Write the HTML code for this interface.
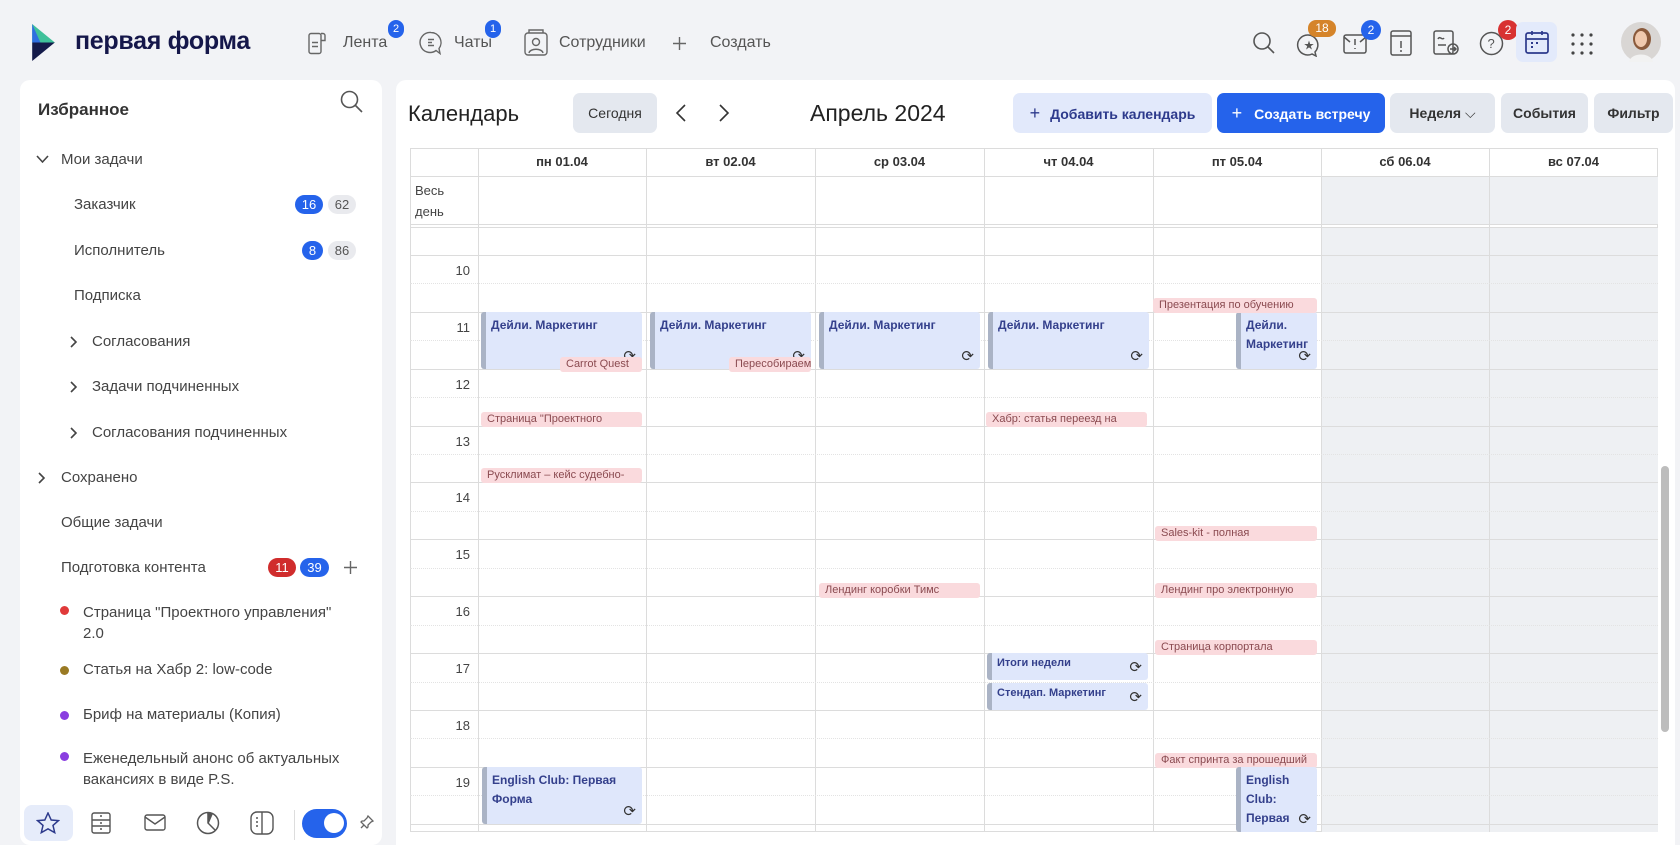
<!DOCTYPE html>
<html><head><meta charset="utf-8"><style>
*{box-sizing:border-box;margin:0;padding:0}
body{width:1680px;height:845px;overflow:hidden;background:#f2f3f6;font-family:"Liberation Sans","Noto Sans CJK SC",sans-serif;position:relative;color:#333}
.a{position:absolute}
.nav{font-size:16px;color:#555;top:34px}
.badge{position:absolute;height:16px;min-width:16px;border-radius:8px;color:#fff;font-size:11px;text-align:center;line-height:16px;padding:0 4px}
.side{left:20px;top:80px;width:362px;height:765px;background:#fff;border-radius:10px}
.si{position:absolute;font-size:15px;color:#444;white-space:nowrap}
.pill{position:absolute;height:19px;border-radius:10px;font-size:13px;text-align:center;line-height:19px}
.main{left:396px;top:80px;width:1279px;height:765px;background:#fff;border-radius:10px}
.btn{position:absolute;top:93px;height:40px;border-radius:7px;background:#e4e8ef;font-size:14px;color:#333;font-weight:bold;text-align:center;line-height:40px}
.hl{position:absolute;left:410px;width:1248px;height:1px;background:#dcdcdc}
.hh{position:absolute;left:410px;width:1248px;height:0;border-top:1px dotted #e3e3e3}
.vl{position:absolute;top:148px;width:1px;height:684px;background:#dcdcdc}
.dh{position:absolute;top:148px;height:28px;font-size:13px;font-weight:bold;color:#333;text-align:center;line-height:28px}
.hr{position:absolute;left:430px;width:40px;text-align:right;font-size:13px;color:#444}
.ev{position:absolute;background:#dfe7fb;border-left:5px solid #aab3c5;border-radius:3px;color:#34408c;font-size:12px;font-weight:bold;padding:4px 5px;line-height:19px;overflow:hidden}
.pk{position:absolute;background:#fadadd;color:#8a4a50;font-size:11px;height:15px;line-height:15px;padding:0 6px;border-radius:3px;overflow:hidden;white-space:nowrap}
.rep{position:absolute;right:6px;bottom:3px;font-size:15px;color:#333;font-weight:normal}
.chev{position:absolute}
</style></head><body>
<!-- logo -->
<svg class="a" style="left:32px;top:24px" width="23" height="37" viewBox="0 0 22 36"><polygon points="0,0 22,18 0,18" fill="#3fc19a"/><polygon points="0,0 0,18 8,18" fill="#2f6fe0"/><polygon points="0,18 22,18 0,36" fill="#141a4a"/></svg>
<div class="a" style="left:75px;top:27px;font-size:25px;font-weight:bold;color:#15174a;letter-spacing:-0.3px">первая форма</div>
<!-- nav -->
<svg class="a" style="left:308px;top:30px" width="18" height="25" viewBox="0 0 18 24" fill="none" stroke="#666" stroke-width="1.4"><rect x="1" y="3" width="12" height="20" rx="2"/><path d="M13 3h2a2 2 0 0 1 2 2v5h-4M4 12h6M4 16h6"/></svg>
<div class="a nav" style="left:343px">Лента</div><div class="badge" style="left:388px;top:20px;background:#2563eb;height:18px;line-height:18px;border-radius:9px">2</div>
<svg class="a" style="left:419px;top:30px" width="24" height="25" viewBox="0 0 24 24" fill="none" stroke="#666" stroke-width="1.4"><path d="M12 2a10 10 0 1 0 5 18l4 3-1-5A10 10 0 0 0 12 2z"/><path d="M9 9h6M9 12h4M9 15h6"/></svg>
<div class="a nav" style="left:454px">Чаты</div><div class="badge" style="left:485px;top:20px;background:#2563eb;height:18px;line-height:18px;border-radius:9px">1</div>
<svg class="a" style="left:524px;top:29px" width="24" height="27" viewBox="0 0 24 27" fill="none" stroke="#666" stroke-width="1.4"><rect x="1" y="4" width="22" height="22" rx="3"/><path d="M5 4V1h14v3"/><circle cx="12" cy="13" r="3.5"/><path d="M5 24c1-5 13-5 14 0"/></svg>
<div class="a nav" style="left:559px">Сотрудники</div>
<svg class="a" style="left:673px;top:37px" width="13" height="13" viewBox="0 0 13 13" stroke="#666" stroke-width="1.4"><path d="M6.5 0v13M0 6.5h13"/></svg>
<div class="a nav" style="left:710px">Создать</div>
<!-- right icons -->
<svg class="a" style="left:1252px;top:31px" width="24" height="24" viewBox="0 0 24 24" fill="none" stroke="#555" stroke-width="1.6"><circle cx="10" cy="10" r="8"/><path d="M16 16l6 6"/></svg>
<svg class="a" style="left:1296px;top:33px" width="26" height="24" viewBox="0 0 26 24" fill="none" stroke="#555" stroke-width="1.5"><path d="M12 2a10 10 0 1 0 4 19l4 2-1-4A10 10 0 0 0 12 2z"/><text x="8" y="16" font-size="10" fill="#555" stroke="none">★</text></svg>
<div class="badge" style="left:1308px;top:20px;background:#d5842a;font-size:12px;width:28px;height:17px">18</div>
<svg class="a" style="left:1343px;top:34px" width="24" height="20" viewBox="0 0 24 20" fill="none" stroke="#555" stroke-width="1.5"><rect x="1" y="1" width="22" height="18" rx="2"/><path d="M1 3l6 5M23 3l-6 5M12 5v6M12 14v1"/></svg>
<div class="badge" style="left:1361px;top:20px;background:#2563eb;font-size:12px;width:20px;height:20px;border-radius:10px;line-height:20px">2</div>
<svg class="a" style="left:1390px;top:30px" width="22" height="26" viewBox="0 0 22 26" fill="none" stroke="#555" stroke-width="1.5"><rect x="1" y="1" width="20" height="24" rx="2"/><path d="M1 6h20M11 11v7M11 20v2"/></svg>
<svg class="a" style="left:1433px;top:30px" width="26" height="26" viewBox="0 0 26 26" fill="none" stroke="#555" stroke-width="1.5"><rect x="1" y="1" width="19" height="23" rx="2"/><path d="M5 9c2-4 4 2 6-1M5 15h8"/><circle cx="20" cy="19" r="5"/><path d="M17 19h6M21 17l2 2-2 2"/></svg>
<svg class="a" style="left:1479px;top:31px" width="25" height="25" viewBox="0 0 25 25" fill="none" stroke="#555" stroke-width="1.5"><circle cx="12.5" cy="12.5" r="11"/><text x="8.5" y="17" font-size="13" fill="#555" stroke="none">?</text></svg>
<div class="badge" style="left:1498px;top:20px;background:#d83232;font-size:12px;width:20px;height:20px;border-radius:10px;line-height:20px">2</div>
<div class="a" style="left:1516px;top:22px;width:41px;height:40px;background:#e3eafb;border-radius:7px"></div>
<svg class="a" style="left:1525px;top:30px" width="24" height="24" viewBox="0 0 24 24" fill="none" stroke="#2d3a8c" stroke-width="1.7"><rect x="1" y="3" width="22" height="20" rx="2"/><path d="M1 9h22M7 1v4M17 1v4"/><path d="M6 13h2M11 13h2M6 17h2" stroke-width="2"/></svg>
<svg class="a" style="left:1571px;top:33px" width="22" height="22" viewBox="0 0 22 22" fill="#444"><circle cx="2" cy="2" r="1.6"/><circle cx="11" cy="2" r="1.6"/><circle cx="20" cy="2" r="1.6"/><circle cx="2" cy="11" r="1.6"/><circle cx="11" cy="11" r="1.6"/><circle cx="20" cy="11" r="1.6"/><circle cx="2" cy="20" r="1.6"/><circle cx="11" cy="20" r="1.6"/><circle cx="20" cy="20" r="1.6"/></svg>
<svg class="a" style="left:1621px;top:22px" width="40" height="40" viewBox="0 0 40 40"><circle cx="20" cy="20" r="20" fill="#d9d6d4"/><ellipse cx="21" cy="17" rx="9" ry="11" fill="#8a5a3c"/><ellipse cx="20" cy="17" rx="6" ry="8" fill="#f0c9ae"/><path d="M8 40c2-10 22-10 24 0z" fill="#f2f2f2"/></svg>

<!-- sidebar -->
<div class="a side"></div>
<div class="si" style="left:38px;top:100px;font-size:17px;font-weight:bold;color:#333">Избранное</div>
<svg class="a" style="left:340px;top:90px" width="23" height="23" viewBox="0 0 23 23" fill="none" stroke="#555" stroke-width="1.6"><circle cx="9.5" cy="9.5" r="8"/><path d="M15 15l7 7"/></svg>
<svg class="a" style="left:36px;top:155px" width="13" height="9" viewBox="0 0 13 9" fill="none" stroke="#444" stroke-width="1.6"><path d="M1 1l5.5 6L12 1"/></svg>
<div class="si" style="left:61px;top:151px">Мои задачи</div>
<div class="si" style="left:74px;top:196px">Заказчик</div>
<div class="pill" style="left:295px;top:195px;width:28px;background:#2563eb;color:#fff">16</div>
<div class="pill" style="left:328px;top:195px;width:28px;background:#e9eaee;color:#555">62</div>
<div class="si" style="left:74px;top:242px">Исполнитель</div>
<div class="pill" style="left:302px;top:241px;width:21px;background:#2563eb;color:#fff">8</div>
<div class="pill" style="left:328px;top:241px;width:28px;background:#e9eaee;color:#555">86</div>
<div class="si" style="left:74px;top:287px">Подписка</div>
<svg class="chev" style="left:70px;top:336px" width="8" height="12" viewBox="0 0 8 12" fill="none" stroke="#444" stroke-width="1.6"><path d="M1 1l5 5-5 5"/></svg><div class="si" style="left:92px;top:333px">Согласования</div>
<svg class="chev" style="left:70px;top:381px" width="8" height="12" viewBox="0 0 8 12" fill="none" stroke="#444" stroke-width="1.6"><path d="M1 1l5 5-5 5"/></svg><div class="si" style="left:92px;top:378px">Задачи подчиненных</div>
<svg class="chev" style="left:70px;top:427px" width="8" height="12" viewBox="0 0 8 12" fill="none" stroke="#444" stroke-width="1.6"><path d="M1 1l5 5-5 5"/></svg><div class="si" style="left:92px;top:424px">Согласования подчиненных</div>
<svg class="chev" style="left:38px;top:472px" width="8" height="12" viewBox="0 0 8 12" fill="none" stroke="#444" stroke-width="1.6"><path d="M1 1l5 5-5 5"/></svg><div class="si" style="left:61px;top:469px">Сохранено</div>
<div class="si" style="left:61px;top:514px">Общие задачи</div>
<div class="si" style="left:61px;top:559px">Подготовка контента</div>
<div class="pill" style="left:268px;top:558px;width:28px;background:#d02c2c;color:#fff">11</div>
<div class="pill" style="left:300px;top:558px;width:29px;background:#2563eb;color:#fff">39</div>
<svg class="a" style="left:344px;top:561px" width="13" height="13" viewBox="0 0 13 13" stroke="#666" stroke-width="1.4"><path d="M6.5 0v13M0 6.5h13"/></svg>
<div class="a" style="left:60px;top:606px;width:9px;height:9px;border-radius:5px;background:#e03a3a"></div>
<div class="si" style="left:83px;top:602px;line-height:21px">Страница "Проектного управления"<br>2.0</div>
<div class="a" style="left:60px;top:666px;width:9px;height:9px;border-radius:5px;background:#9a7a24"></div>
<div class="si" style="left:83px;top:661px">Статья на Хабр 2: low-code</div>
<div class="a" style="left:60px;top:711px;width:9px;height:9px;border-radius:5px;background:#8a3ee0"></div>
<div class="si" style="left:83px;top:706px">Бриф на материалы (Копия)</div>
<div class="a" style="left:60px;top:752px;width:9px;height:9px;border-radius:5px;background:#8a3ee0"></div>
<div class="si" style="left:83px;top:748px;line-height:21px">Еженедельный анонс об актуальных<br>вакансиях в виде P.S.</div>
<div class="a" style="left:24px;top:805px;width:49px;height:36px;background:#e6ecfa;border-radius:8px"></div>
<svg class="a" style="left:36px;top:812px" width="24" height="23" viewBox="0 0 24 23" fill="none" stroke="#2d3a8c" stroke-width="1.5"><path d="M12 1l3.2 7 7.3.6-5.5 4.8 1.7 7.2L12 16.8 5.3 20.6 7 13.4 1.5 8.6 8.8 8z"/></svg>
<svg class="a" style="left:91px;top:812px" width="20" height="22" viewBox="0 0 20 22" fill="none" stroke="#555" stroke-width="1.4"><rect x="1" y="1" width="18" height="20" rx="2"/><path d="M1 8h18M1 14h18M9 4h2M9 11h2M9 17h2"/></svg>
<svg class="a" style="left:144px;top:814px" width="22" height="17" viewBox="0 0 22 17" fill="none" stroke="#555" stroke-width="1.4"><rect x="1" y="1" width="20" height="15" rx="2"/><path d="M1 3l10 7 10-7"/></svg>
<svg class="a" style="left:196px;top:811px" width="24" height="24" viewBox="0 0 24 24" fill="none" stroke="#555" stroke-width="1.5"><circle cx="12" cy="12" r="10.5"/><path d="M12 1.5V12l7 7"/><path d="M12 2a10 10 0 0 1 4 1L13 10z" fill="#555"/></svg>
<svg class="a" style="left:250px;top:811px" width="24" height="24" viewBox="0 0 24 24" fill="none" stroke="#555" stroke-width="1.4"><rect x="1" y="1" width="22" height="22" rx="6"/><path d="M12 1v22M6 7h2M6 11h2M6 15h2"/></svg>
<div class="a" style="left:294px;top:810px;width:1px;height:30px;background:#ddd"></div>
<div class="a" style="left:302px;top:809px;width:45px;height:29px;background:#2563eb;border-radius:15px"></div>
<div class="a" style="left:324px;top:813px;width:20px;height:20px;background:#fff;border-radius:10px"></div>
<svg class="a" style="left:360px;top:815px" width="14" height="14" viewBox="0 0 14 14" fill="none" stroke="#666" stroke-width="1.3"><path d="M8 1l5 5-2 1-3 3 0 2-1 1-6-6 1-1h2l3-3z M4 10l-3 3"/></svg>

<!-- main -->
<div class="a main"></div>
<div class="a" style="left:408px;top:101px;font-size:22px;color:#222">Календарь</div>
<div class="btn" style="left:573px;width:84px;font-weight:normal;font-size:14px">Сегодня</div>
<svg class="a" style="left:675px;top:103px" width="12" height="20" viewBox="0 0 12 20" fill="none" stroke="#333" stroke-width="1.6"><path d="M10 2L2 10l8 8"/></svg>
<svg class="a" style="left:718px;top:103px" width="12" height="20" viewBox="0 0 12 20" fill="none" stroke="#333" stroke-width="1.6"><path d="M2 2l8 8-8 8"/></svg>
<div class="a" style="left:810px;top:100px;font-size:23px;color:#222">Апрель 2024</div>
<div class="btn" style="left:1013px;width:199px;background:#e2e9fb;color:#2d3a8c"><span style="font-weight:normal;font-size:18px;margin-right:10px">+</span>Добавить календарь</div>
<div class="btn" style="left:1217px;width:168px;background:#2563eb;color:#fff"><span style="font-weight:normal;font-size:18px;margin-right:12px">+</span>Создать встречу</div>
<div class="btn" style="left:1390px;width:105px">Неделя <span style="font-weight:normal">⌵</span></div>
<div class="btn" style="left:1501px;width:87px">События</div>
<div class="btn" style="left:1594px;width:79px">Фильтр</div>

<!-- grid -->
<div class="a" style="left:410px;top:148px;width:1248px;height:684px;border:1px solid #dcdcdc"></div>
<div class="a" style="left:1321px;top:176px;width:337px;height:49px;background:#eef0f3"></div>
<div class="a" style="left:1321px;top:228px;width:337px;height:604px;background:#eef0f3"></div>
<div class="hl" style="top:176px"></div>
<div class="hl" style="top:224px"></div><div class="hl" style="top:227px"></div>
<div class="a" style="left:410px;top:148px;width:1px;height:684px;background:#dcdcdc"></div>
<div class="vl" style="left:478px"></div><div class="vl" style="left:646px"></div><div class="vl" style="left:815px"></div><div class="vl" style="left:984px"></div><div class="vl" style="left:1153px"></div><div class="vl" style="left:1321px"></div><div class="vl" style="left:1489px"></div>
<div class="dh" style="left:478px;width:168px">пн 01.04</div>
<div class="dh" style="left:646px;width:169px">вт 02.04</div>
<div class="dh" style="left:815px;width:169px">ср 03.04</div>
<div class="dh" style="left:984px;width:169px">чт 04.04</div>
<div class="dh" style="left:1153px;width:168px">пт 05.04</div>
<div class="dh" style="left:1321px;width:168px">сб 06.04</div>
<div class="dh" style="left:1489px;width:169px">вс 07.04</div>
<div class="a" style="left:415px;top:180px;font-size:13px;color:#444;line-height:21px">Весь<br>день</div>

<div class="hl" style="top:255px"></div><div class="hl" style="top:312px"></div><div class="hl" style="top:369px"></div><div class="hl" style="top:426px"></div><div class="hl" style="top:482px"></div><div class="hl" style="top:539px"></div><div class="hl" style="top:596px"></div><div class="hl" style="top:653px"></div><div class="hl" style="top:710px"></div><div class="hl" style="top:767px"></div><div class="hl" style="top:824px"></div>
<div class="hh" style="top:283px"></div><div class="hh" style="top:340px"></div><div class="hh" style="top:397px"></div><div class="hh" style="top:454px"></div><div class="hh" style="top:511px"></div><div class="hh" style="top:568px"></div><div class="hh" style="top:625px"></div><div class="hh" style="top:682px"></div><div class="hh" style="top:738px"></div><div class="hh" style="top:795px"></div>
<div class="hr" style="top:263px">10</div><div class="hr" style="top:320px">11</div><div class="hr" style="top:377px">12</div><div class="hr" style="top:434px">13</div><div class="hr" style="top:490px">14</div><div class="hr" style="top:547px">15</div><div class="hr" style="top:604px">16</div><div class="hr" style="top:661px">17</div><div class="hr" style="top:718px">18</div><div class="hr" style="top:775px">19</div>

<!-- events -->
<div class="ev" style="left:481px;top:312px;width:161px;height:57px">Дейли. Маркетинг<span class="rep">⟳</span></div>
<div class="ev" style="left:650px;top:312px;width:161px;height:57px">Дейли. Маркетинг<span class="rep">⟳</span></div>
<div class="ev" style="left:819px;top:312px;width:161px;height:57px">Дейли. Маркетинг<span class="rep">⟳</span></div>
<div class="ev" style="left:988px;top:312px;width:161px;height:57px">Дейли. Маркетинг<span class="rep">⟳</span></div>
<div class="ev" style="left:1236px;top:312px;width:81px;height:57px">Дейли.<br>Маркетинг<span class="rep">⟳</span></div>
<div class="pk" style="left:560px;top:357px;width:82px">Carrot Quest</div>
<div class="pk" style="left:729px;top:357px;width:82px">Пересобираем</div>
<div class="pk" style="left:1153px;top:298px;width:164px">Презентация по обучению</div>
<div class="pk" style="left:481px;top:412px;width:161px">Страница "Проектного</div>
<div class="pk" style="left:986px;top:412px;width:161px">Хабр: статья переезд на</div>
<div class="pk" style="left:481px;top:468px;width:161px">Русклимат – кейс судебно-</div>
<div class="pk" style="left:1155px;top:526px;width:162px">Sales-kit - полная</div>
<div class="pk" style="left:819px;top:583px;width:161px">Лендинг коробки Тимс</div>
<div class="pk" style="left:1155px;top:583px;width:162px">Лендинг про электронную</div>
<div class="pk" style="left:1155px;top:640px;width:162px">Страница корпортала</div>
<div class="ev" style="left:987px;top:653px;width:161px;height:27px;padding-top:1px;font-size:11px">Итоги недели<span class="rep">⟳</span></div>
<div class="ev" style="left:987px;top:683px;width:161px;height:27px;padding-top:1px;font-size:11px">Стендап. Маркетинг<span class="rep">⟳</span></div>
<div class="pk" style="left:1155px;top:753px;width:162px">Факт спринта за прошедший</div>
<div class="ev" style="left:482px;top:767px;width:160px;height:57px">English Club: Первая<br>Форма<span class="rep">⟳</span></div>
<div class="ev" style="left:1236px;top:767px;width:81px;height:65px">English<br>Club:<br>Первая<span class="rep">⟳</span></div>
<div class="a" style="left:396px;top:832px;width:1279px;height:13px;background:#fff"></div>
<div class="a" style="left:1661px;top:466px;width:8px;height:266px;background:#bdbdbd;border-radius:4px"></div>
</body></html>
